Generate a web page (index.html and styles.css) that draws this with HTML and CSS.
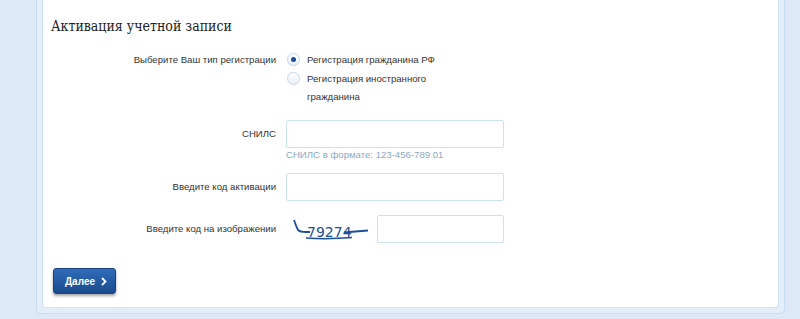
FILE: index.html
```html
<!DOCTYPE html>
<html lang="ru">
<head>
    <meta charset="UTF-8">
    <title>Активация учетной записи</title>
    <link rel="stylesheet" href="styles.css">
</head>
<body>
<div class="frame">
    <div class="card">
        <h1 class="title">Активация учетной записи</h1>

        <div class="row row-type">
            <div class="label">Выберите Ваш тип регистрации</div>
            <div class="field">
                <label class="radio">
                    <span class="dot checked"></span>
                    <span class="radio-text">Регистрация гражданина РФ</span>
                </label>
                <label class="radio">
                    <span class="dot"></span>
                    <span class="radio-text">Регистрация иностранного<br>гражданина</span>
                </label>
            </div>
        </div>

        <div class="row row-snils">
            <div class="label">СНИЛС</div>
            <div class="field">
                <input type="text" class="inp">
            </div>
        </div>
        <div class="hint-row">
            <div class="hint">СНИЛС в формате: 123-456-789 01</div>
        </div>

        <div class="row row-code">
            <div class="label">Введите код активации</div>
            <div class="field">
                <input type="text" class="inp">
            </div>
        </div>

        <div class="row row-captcha">
            <div class="label">Введите код на изображении</div>
            <div class="field captcha-field">
                <svg class="captcha" width="80" height="28" viewBox="0 0 80 28">
                    <path d="M2 4 Q4 10 6 14 Q8 16 14 16 L18 16" stroke="#1d4f9a" stroke-width="1.8" fill="none"/>
                    <text x="15" y="21" class="captcha-text">79274</text>
                    <path d="M14 22 Q36 23.5 60 21.5" stroke="#1d4f9a" stroke-width="1.5" fill="none"/>
                    <path d="M52 16.5 Q63 15.5 76 14.5" stroke="#1d4f9a" stroke-width="1.8" fill="none"/>
                </svg>
                <input type="text" class="inp inp-short">
            </div>
        </div>

        <button class="btn">Далее <svg width="6" height="9" viewBox="0 0 6 9"><path d="M1 1 L4.5 4.5 L1 8" stroke="#fff" stroke-width="1.8" fill="none"/></svg></button>
    </div>
</div>
</body>
</html>
```

FILE: styles.css
```css
*{
    margin: 0;
    padding: 0;
    box-sizing: border-box;
}
body{
    background: #dde9f6;
    font-family: "Liberation Sans", Arial, sans-serif;
    font-size: 9.6px;
    color: #333;
}
.frame{
    width: 749px;
    margin: -2px 0 0 36px;
    padding: 0 5px 5px 5px;
    background: #e3eef9;
    border: 1px solid #c6dcef;
    border-radius: 0 0 5px 5px;
}
.card{
    background: #fff;
    border: 1px solid #cfe2f1;
    border-top: none;
    border-radius: 0 0 3px 3px;
    padding: 17px 8px 13px 8px;
}
.title{
    font-family: "DejaVu Serif Condensed", "DejaVu Serif", serif;
    font-stretch: condensed;
    font-weight: normal;
    font-size: 14px;
    line-height: 20px;
    color: #222;
    margin-bottom: 15px;
}
.row{
    display: flex;
    align-items: center;
}
.label{
    width: 225px;
    text-align: right;
    line-height: 18px;
}
.field{
    margin-left: 10px;
}
.row-type{
    align-items: flex-start;
}
.radio{
    display: flex;
    align-items: flex-start;
    line-height: 18px;
    margin-left: 1px;
}
.radio + .radio{
    margin-top: 1px;
}
.dot{
    width: 13px;
    height: 13px;
    border-radius: 50%;
    border: 1px solid #c3d5e6;
    background: linear-gradient(#ffffff, #e9f0f7);
    margin-top: 2px;
    margin-right: 7px;
    flex: none;
    position: relative;
}
.dot.checked::after{
    content: "";
    position: absolute;
    left: 3px;
    top: 3px;
    width: 5px;
    height: 5px;
    border-radius: 50%;
    background: #1b4d92;
}
.row-snils{
    margin-top: 14px;
}
.inp{
    display: block;
    width: 218px;
    height: 28px;
    border: 1px solid #cde3ec;
    border-radius: 2px;
    background: #fff;
    outline: none;
}
.inp-short{
    width: 127px;
}
.hint-row{
    padding-left: 235px;
}
.hint{
    color: #8aa9c4;
    font-size: 9.6px;
    line-height: 14px;
}
.row-code{
    margin-top: 11px;
}
.row-captcha{
    margin-top: 13px;
}
.captcha-field{
    display: flex;
    align-items: center;
}
.captcha{
    display: block;
    margin: 2px 5px 0 6px;
}
.captcha-text{
    font-family: "DejaVu Sans", sans-serif;
    font-size: 14px;
    fill: #1d4f9a;
}
.btn{
    display: flex;
    align-items: center;
    gap: 6px;
    margin: 24px 0 0 2px;
    height: 26px;
    padding: 0 8px 0 11px;
    border: 1px solid #17427f;
    border-radius: 3px;
    background: linear-gradient(#2f6cba, #1a4a8c);
    box-shadow: 0 2px 3px rgba(0, 0, 0, 0.35);
    color: #fff;
    font-family: "Liberation Sans", Arial, sans-serif;
    font-weight: bold;
    font-size: 10px;
}
```
